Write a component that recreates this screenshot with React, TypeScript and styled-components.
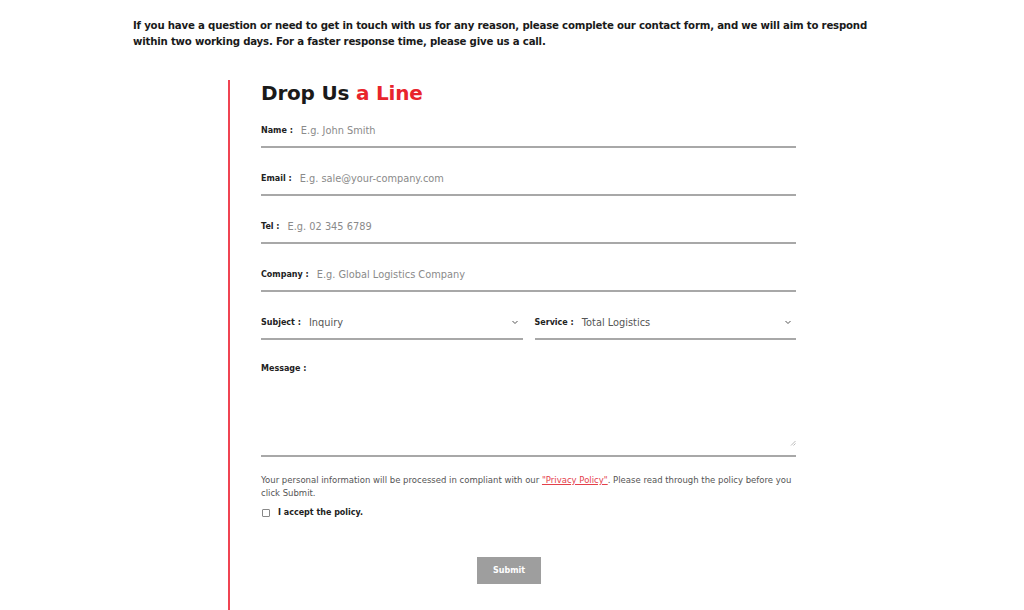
import React, { FC } from 'react';
import styled, { createGlobalStyle } from 'styled-components';

const GlobalStyle = createGlobalStyle`
  body {
    margin: 0;
    background: #fff;
    font-family: 'DejaVu Sans', 'Open Sans', sans-serif;
    color: #1a1a1a;
  }
`;

const Page = styled.div`
  padding: 18px 0 0 133px;
  height: 610px;
  box-sizing: border-box;
  overflow: hidden;
`;

const Intro = styled.p`
  margin: 0;
  font-size: 10.2px;
  font-weight: bold;
  line-height: 16px;
  letter-spacing: -0.2px;
  color: #1a1a1a;
`;

const FormSection = styled.section`
  margin: 30px 0 0 95px;
  border-left: 2px solid #f04452;
  padding: 0 0 40px 31px;
  width: 535px;
`;

const Title = styled.h2`
  margin: 0;
  padding-top: 1px;
  font-size: 20px;
  font-weight: bold;
  line-height: 24px;
  color: #1a1a1a;
  letter-spacing: -0.2px;
`;

const Red = styled.span`
  color: #e8242c;
`;

const Row = styled.div`
  display: grid;
  grid-template-columns: 1fr 1fr;
  gap: 12px;
`;

const Field = styled.label<{ $first?: boolean }>`
  display: flex;
  align-items: center;
  height: 24px;
  margin-top: ${({ $first }) => ($first ? '13px' : '18px')};
  border-bottom: 2px solid #a8a8a8;
  padding-bottom: 4px;
`;

const Label = styled.span`
  font-size: 8px;
  font-weight: bold;
  color: #222;
  margin-right: 8px;
  white-space: nowrap;
`;

const Placeholder = styled.span`
  font-size: 9.8px;
  color: #8a8a8a;
  flex: 1;
`;

const Value = styled(Placeholder)`
  color: #555;
  padding-top: 1px;
`;

const Chevron = styled.svg`
  width: 8px;
  height: 8px;
  margin-right: 4px;
`;

const MessageBox = styled.div`
  position: relative;
  margin-top: 24px;
  height: 91px;
  border-bottom: 2px solid #a8a8a8;
`;

const MessageLabel = styled(Label)`
  display: block;
`;

const ResizeGrip = styled.svg`
  position: absolute;
  right: 0;
  bottom: 9px;
  width: 6px;
  height: 6px;
`;

const Notice = styled.p`
  margin: 17px 0 0;
  font-size: 8.5px;
  line-height: 13px;
  color: #555;
`;

const PolicyLink = styled.a`
  color: #e4404a;
  text-decoration: underline;
`;

const Accept = styled.label`
  display: flex;
  align-items: center;
  gap: 8px;
  margin-top: 8px;
  padding-left: 1px;
`;

const Box = styled.span`
  width: 6px;
  height: 6px;
  border: 1px solid #888;
  border-radius: 1px;
`;

const AcceptText = styled.span`
  font-size: 8px;
  font-weight: bold;
  color: #222;
`;

const Actions = styled.div`
  display: flex;
  margin-top: 40px;
  padding-left: 216px;
`;

const SubmitButton = styled.button`
  width: 64px;
  height: 27px;
  border: none;
  background: #9e9e9e;
  color: #fff;
  font-family: inherit;
  font-size: 8px;
  font-weight: bold;
`;

const ChevronIcon: FC = () => (
  <Chevron viewBox="0 0 8 8">
    <path d="M1.5 3 L4 5.5 L6.5 3" fill="none" stroke="#555" strokeWidth="1" />
  </Chevron>
);

const App: FC = () => {
  return (
    <Page>
      <GlobalStyle />
      <Intro>
        If you have a question or need to get in touch with us for any reason, please complete our contact form, and we will aim to respond
        <br />
        within two working days. For a faster response time, please give us a call.
      </Intro>
      <FormSection>
        <Title>
          Drop Us <Red>a Line</Red>
        </Title>
        <Field $first>
          <Label>Name :</Label>
          <Placeholder>E.g. John Smith</Placeholder>
        </Field>
        <Field>
          <Label>Email :</Label>
          <Placeholder>E.g. sale@your-company.com</Placeholder>
        </Field>
        <Field>
          <Label>Tel :</Label>
          <Placeholder>E.g. 02 345 6789</Placeholder>
        </Field>
        <Field>
          <Label>Company :</Label>
          <Placeholder>E.g. Global Logistics Company</Placeholder>
        </Field>
        <Row>
          <Field>
            <Label>Subject :</Label>
            <Value>Inquiry</Value>
            <ChevronIcon />
          </Field>
          <Field>
            <Label>Service :</Label>
            <Value>Total Logistics</Value>
            <ChevronIcon />
          </Field>
        </Row>
        <MessageBox>
          <MessageLabel>Message :</MessageLabel>
          <ResizeGrip viewBox="0 0 6 6">
            <path d="M1 5.5 L5.5 1 M3.5 5.5 L5.5 3.5" stroke="#aaa" strokeWidth="0.8" />
          </ResizeGrip>
        </MessageBox>
        <Notice>
          Your personal information will be processed in compliant with our{' '}
          <PolicyLink href="#">"Privacy Policy"</PolicyLink>. Please read through the policy before you
          <br />
          click Submit.
        </Notice>
        <Accept>
          <Box />
          <AcceptText>I accept the policy.</AcceptText>
        </Accept>
        <Actions>
          <SubmitButton>Submit</SubmitButton>
        </Actions>
      </FormSection>
    </Page>
  );
};

export default App;
